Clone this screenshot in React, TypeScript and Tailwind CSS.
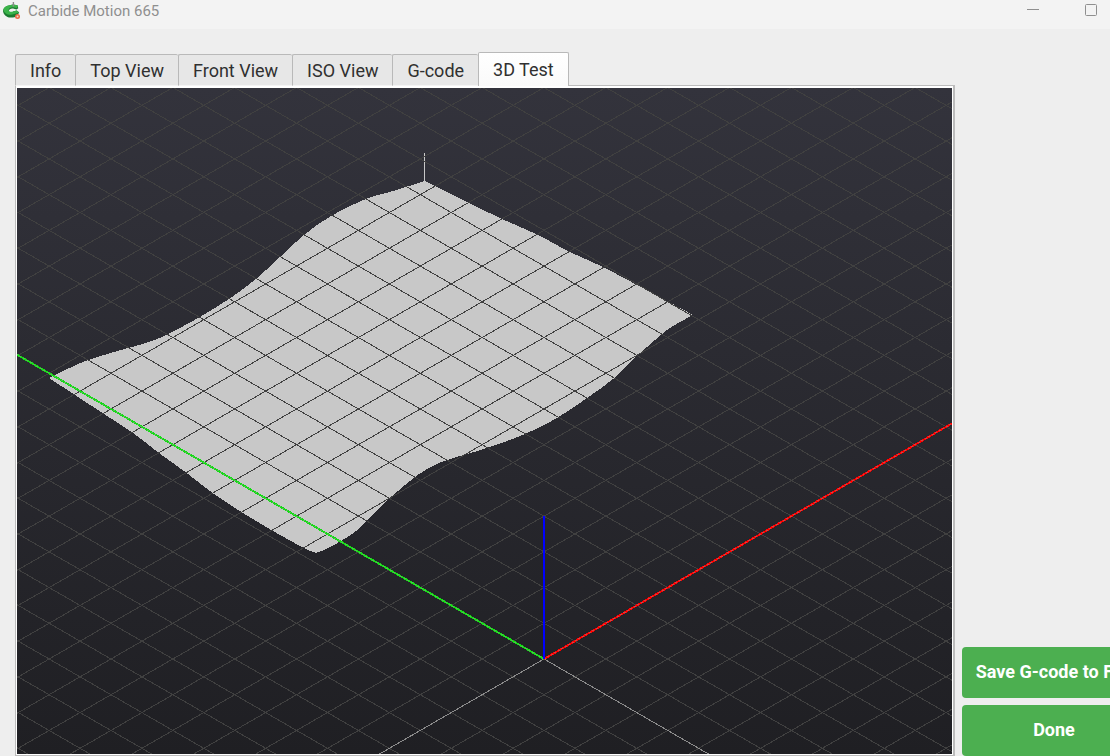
import { useState } from 'react'
import clsx from 'clsx'

const tabs = ['Info', 'Top View', 'Front View', 'ISO View', 'G-code', '3D Test']

// Isometric projection: half width and half height of one grid cell
const CELL_X = 30.93
const CELL_Y = 17.86
const GRID_SIZE = 50

const gridLines = Array.from({ length: GRID_SIZE * 2 + 1 }, (_, i) => i - GRID_SIZE).filter(
    (i) => i !== 0
)

const project = (x: number, y: number) => ({
    x: (x - y) * CELL_X,
    y: -(x + y) * CELL_Y,
})

// The four edges of the toolpath, relative to the machine origin.
// Each edge starts where the previous one ends.
const toolpathEdges = [
    [
        [-495, -281], [-461, -297], [-430, -307], [-395, -317], [-376, -325],
        [-346, -341], [-315, -360], [-288, -380], [-263, -403], [-240, -424],
        [-213, -443], [-178, -460], [-151, -468], [-119, -478],
    ],
    [
        [-119, -478], [-109, -473], [-81, -459], [-44, -441], [-6, -424],
        [24, -408], [59, -392], [93, -374], [123, -358], [149, -344],
    ],
    [
        [149, -344], [129, -333], [118, -325], [93, -303], [69, -280],
        [43, -261], [13, -241], [-19, -225], [-57, -211], [-97, -199],
        [-117, -190], [-134, -178], [-155, -160], [-171, -144], [-188, -128],
        [-203, -118], [-218, -110], [-228, -106],
    ],
    [
        [-228, -106], [-240, -111], [-271, -128], [-301, -146], [-330, -165],
        [-356, -185], [-385, -206], [-411, -226], [-440, -245], [-495, -281],
    ],
]

// Catmull-Rom spline through the points, as cubic segments
const smooth = (points: number[][]) =>
    points
        .slice(0, -1)
        .map((p1, i) => {
            const p0 = points[i - 1] ?? p1
            const p2 = points[i + 1]
            const p3 = points[i + 2] ?? p2
            const c1 = [p1[0] + (p2[0] - p0[0]) / 6, p1[1] + (p2[1] - p0[1]) / 6]
            const c2 = [p2[0] - (p3[0] - p1[0]) / 6, p2[1] - (p3[1] - p1[1]) / 6]

            return `C${[...c1, ...c2, ...p2].join(' ')}`
        })
        .join('')

const toolpath = `M${toolpathEdges[0][0].join(' ')}${toolpathEdges.map(smooth).join('')}Z`

function AppIcon() {
    return (
        <svg viewBox="0 0 18 18" className="size-[18px]" aria-hidden="true">
            <path
                d="M14.500 3.200 10 2.600 4.500 3.800C1.800 5 0 6.800 0 9c.4 3.600 3.200 6.300 7.500 6.600 2.800.1 5-.6 6.500-1.600l2.200-3.500-2.500-2-3.700.9C9.300 11.600 6 11.300 5.800 9 6 7.200 8 6.300 10 6.600l3.500.8 1.800-1.200z"
                fill="#1c7a30"
            />
            <path
                d="M14.500 3.200 10 2.600 4.500 3.800C1.800 4.800.2 6.200.3 8c1.200 4 5 5.300 9 4.500 2.700-.6 4.900-1.300 6.700-2.300l-2.300-1.700-3.700.9c-1.500.8-4.500.4-4.400-1.400C6 6 8 5 10 5.300l3.500.7 1.300-1z"
                fill="#3bb34a"
            />
            <path d="M9.700 0h1.400v4.500H9.700z" fill="#8c8c8c" />
            <circle cx="14.500" cy="14.500" r="2.500" fill="#ea6a48" />
            <circle cx="14.500" cy="14.500" r="1" fill="#f7d3c5" />
        </svg>
    )
}

function TitleBar() {
    return (
        <header className="flex h-[29px] shrink-0 items-start bg-[#f3f3f3] text-[#8f8f8f]">
            <div className="flex flex-1 items-center gap-x-[7px] pt-px pl-[3px]">
                <AppIcon />
                <h1 className="text-[15px] leading-5">Carbide Motion 665</h1>
            </div>
            <button type="button" aria-label="Minimize" className="flex h-5 w-[58px] items-center justify-center">
                <svg viewBox="0 0 12 12" className="size-3" shapeRendering="crispEdges">
                    <path d="M0 5.500h12" stroke="currentColor" />
                </svg>
            </button>
            <button type="button" aria-label="Maximize" className="flex h-5 w-12 items-center pl-[23px]">
                <svg viewBox="0 0 12 12" className="size-3" fill="none">
                    <rect x=".5" y=".5" width="11" height="11" rx="1" stroke="currentColor" />
                </svg>
            </button>
        </header>
    )
}

function Axis({ x, y, color }: { x: number; y: number; color: string }) {
    const end = project(x, y)

    return (
        <>
            <line x2={end.x} y2={end.y} stroke={color} strokeWidth="2" />
            <line x2={end.x} y2={end.y} stroke="#969696" strokeOpacity=".5" strokeDasharray="2 2" />
        </>
    )
}

function Viewport() {
    return (
        <svg
            viewBox="-527 -571 935 666"
            preserveAspectRatio="xMidYMid slice"
            shapeRendering="crispEdges"
            role="img"
            aria-label="Toolpath preview"
            className="block min-h-0 w-full flex-1 bg-linear-to-b from-[#33333c] to-[#1f1f23]"
        >
            <path d={toolpath} fill="#c8c8c8" />
            <path d="M-119.500-477v-20M-119.500-498v-4M-119.500-503v-3" stroke="#c8c8c8" />
            <g stroke="#404040">
                {gridLines.map((i) => {
                    const a = project(i, -GRID_SIZE)
                    const b = project(i, GRID_SIZE)
                    const c = project(-GRID_SIZE, i)
                    const d = project(GRID_SIZE, i)

                    return (
                        <g key={i}>
                            <line x1={a.x} y1={a.y} x2={b.x} y2={b.y} />
                            <line x1={c.x} y1={c.y} x2={d.x} y2={d.y} />
                        </g>
                    )
                })}
            </g>
            <g stroke="#8c8c8c">
                <line x2={-GRID_SIZE * CELL_X} y2={GRID_SIZE * CELL_Y} />
                <line x2={GRID_SIZE * CELL_X} y2={GRID_SIZE * CELL_Y} />
            </g>
            <Axis x={GRID_SIZE} y={0} color="#ff0000" />
            <Axis x={0} y={GRID_SIZE} color="#14dc14" />
            <path d="M0 0v-143" stroke="#0000ff" strokeWidth="2" />
        </svg>
    )
}

export default function App() {
    const [active, setActive] = useState('3D Test')

    return (
        <div className="flex h-screen flex-col overflow-hidden bg-[#eeeeee] font-[Roboto,sans-serif] text-[#303030]">
            <TitleBar />
            <main className="flex min-h-0 flex-1 gap-x-[7px] pt-[23px] pl-[15px]">
                <section className="flex min-w-0 flex-1 flex-col">
                    <div role="tablist" className="relative -mb-px flex items-end">
                        {tabs.map((tab) => (
                            <button
                                key={tab}
                                type="button"
                                role="tab"
                                aria-selected={tab === active}
                                onClick={() => setActive(tab)}
                                className={clsx(
                                    'rounded-t-xs border-t border-l border-[#b9b9b9] px-3.5 text-lg leading-6',
                                    tab === active
                                        ? 'h-[34px] border-r bg-linear-to-b from-white to-[#fafafa]'
                                        : 'h-8 border-b border-b-[#f4f4f4] bg-[#e7e7e7] pt-0.5'
                                )}
                            >
                                {tab}
                            </button>
                        ))}
                    </div>
                    <div
                        role="tabpanel"
                        aria-label={active}
                        className="flex min-h-0 flex-1 flex-col border border-r-2 border-[#bcbcbc] bg-white px-px pt-0.5 pb-px"
                    >
                        <Viewport />
                    </div>
                </section>
                <aside className="flex w-[148px] flex-col justify-end gap-y-[7px] overflow-hidden text-lg font-bold text-white">
                    <button type="button" className="h-[51px] w-[184px] rounded-sm bg-[#4caf50] pb-px whitespace-nowrap">
                        Save G-code to File
                    </button>
                    <button type="button" className="h-[51px] w-[184px] rounded-sm bg-[#4caf50] pb-px">
                        Done
                    </button>
                </aside>
            </main>
        </div>
    )
}
